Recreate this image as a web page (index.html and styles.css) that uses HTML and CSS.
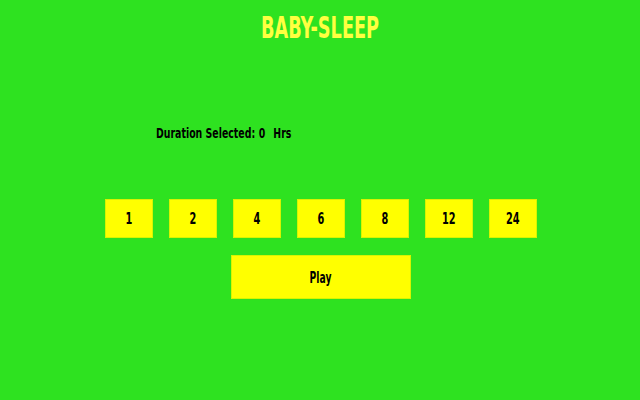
FILE: index.html
```html
<!DOCTYPE html>
<html>
<head>
<meta charset="utf-8">
<link rel="stylesheet" href="styles.css">
</head>
<body>
<div class="page">
  <h1 class="title"><span class="sq">BABY-SLEEP</span></h1>
  <div class="duration"><span class="sq-left">Duration Selected:<span class="val">0</span><span class="unit">Hrs</span></span></div>
  <div class="hours">
    <button class="hour"><span class="sq">1</span></button>
    <button class="hour"><span class="sq">2</span></button>
    <button class="hour"><span class="sq">4</span></button>
    <button class="hour"><span class="sq">6</span></button>
    <button class="hour"><span class="sq">8</span></button>
    <button class="hour"><span class="sq">12</span></button>
    <button class="hour"><span class="sq">24</span></button>
  </div>
  <button class="play"><span class="sq">Play</span></button>
</div>
</body>
</html>
```
FILE: styles.css
```css
html, body {
  margin: 0;
  padding: 0;
  width: 640px;
  height: 400px;
  background: #2ee220;
  overflow: hidden;
}
.page {
  display: flex;
  flex-direction: column;
  align-items: center;
  font-family: "DejaVu Sans", "Liberation Sans", sans-serif;
  font-stretch: condensed;
  font-weight: bold;
  color: #000;
}
.sq {
  display: inline-block;
  transform: scaleX(0.7);
  transform-origin: center;
}
.sq-left {
  display: inline-block;
  white-space: nowrap;
  transform: scaleX(0.72);
  transform-origin: left center;
}
.title {
  margin: 11px 0 0 0;
  font-size: 31px;
  line-height: 32px;
  color: #ffff40;
  white-space: nowrap;
}
.title .sq {
  transform: scaleX(0.635);
}
.duration {
  align-self: flex-start;
  margin: 82px 0 0 156px;
  font-size: 14.5px;
  line-height: 16px;
}
.val {
  margin-left: 5px;
}
.unit {
  margin-left: 11px;
}
.hours {
  display: flex;
  gap: 16px;
  margin-top: 58px;
  margin-left: 2px;
}
.hour, .play {
  font-family: inherit;
  font-stretch: condensed;
  font-weight: bold;
  color: #000;
  background: #ffff00;
  border: 1px solid #d8f400;
  padding: 0;
  font-size: 15.5px;
}
.hour {
  width: 48px;
  height: 39px;
}
.play {
  width: 180px;
  height: 44px;
  margin-top: 17px;
  margin-left: 2px;
  padding-top: 2px;
}
.play .sq {
  transform: scaleX(0.66);
}
```
